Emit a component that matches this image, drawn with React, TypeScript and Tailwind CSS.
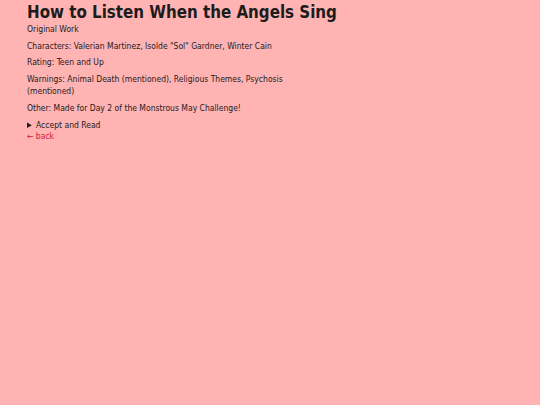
import React from 'react';

export default function App() {
  return (
    <div className="min-h-screen w-full bg-[#ffb3b3] text-[#1c1c1c] font-['DejaVu_Sans_Condensed','DejaVu_Sans',sans-serif]">
      <div className="px-[27px] pt-[3px]">
        <h1 className="text-[16.8px] leading-[18px] font-bold whitespace-nowrap">
          How to Listen When the Angels Sing
        </h1>
        <div className="max-w-[270px] text-[8.5px] leading-[12px]">
          <p className="mt-[2px]">Original Work</p>
          <p className="mt-[5px]">Characters: Valerian Martinez, Isolde "Sol" Gardner, Winter Cain</p>
          <p className="mt-[4px]">Rating: Teen and Up</p>
          <p className="mt-[5px]">Warnings: Animal Death (mentioned), Religious Themes, Psychosis (mentioned)</p>
          <p className="mt-[5px]">Other: Made for Day 2 of the Monstrous May Challenge!</p>
          <details className="mt-[5px]">
            <summary className="cursor-pointer">Accept and Read</summary>
          </details>
          <div className="-mt-[1px] flex items-center">
            <a href="#" className="text-[#d0202c]">← back</a>
            <span className="ml-[1px] text-[#ff9a9a]">⁄</span>
          </div>
        </div>
      </div>
    </div>
  );
}
